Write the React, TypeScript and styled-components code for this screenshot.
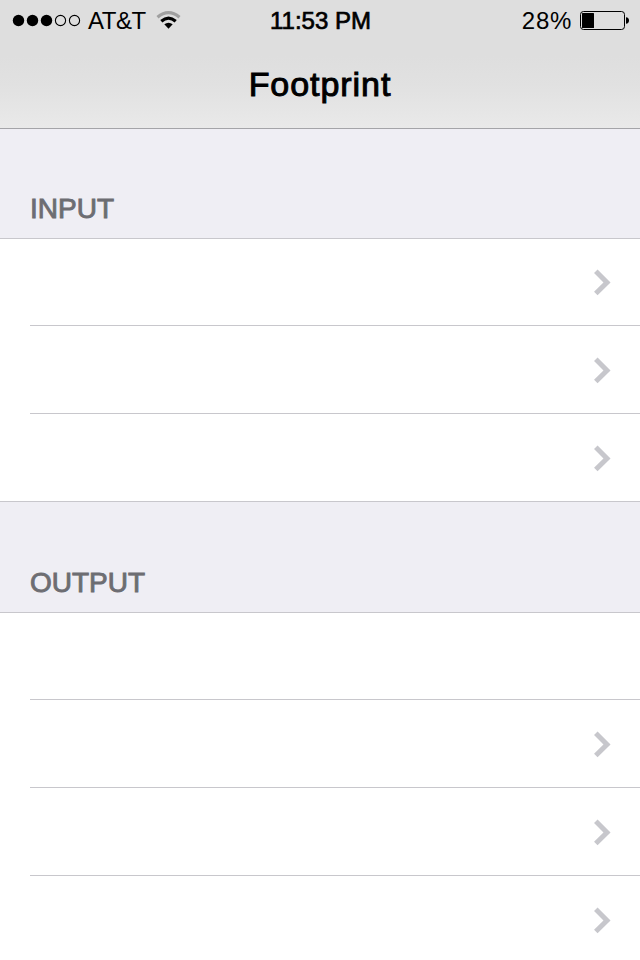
import React from "react";
import styled, { createGlobalStyle } from "styled-components";

const GlobalStyle = createGlobalStyle`
  * { box-sizing: border-box; }
  body { margin: 0; background: #fff; }
`;

const Screen = styled.main`
  width: 640px;
  height: 960px;
  overflow: hidden;
  background: #efeef4;
  font-family: "Liberation Sans", Arial, sans-serif;
  color: #000;
`;

const TopBar = styled.header`
  height: 129px;
  border-bottom: 1px solid #a4a4a8;
  background: linear-gradient(#dedede 0, #dedede 56px, #e1e1e1 85px, #e9e9e9 128px);
`;

const StatusBar = styled.div`
  height: 40px;
  display: grid;
  grid-template-columns: 1fr auto 1fr;
  align-items: center;
  padding: 0 11px 0 12px;
`;

const StatusGroup = styled.div<{ $end?: boolean }>`
  display: flex;
  align-items: center;
  justify-content: ${(p) => (p.$end ? "flex-end" : "flex-start")};
  height: 40px;
`;

const Label = styled.span<{ $spacing: number; $stroke?: number; $indent?: number }>`
  font-size: 24px;
  line-height: 40px;
  height: 38px;
  white-space: nowrap;
  letter-spacing: ${(p) => p.$spacing}px;
  margin-left: ${(p) => p.$indent ?? 0}px;
  -webkit-text-stroke: ${(p) => p.$stroke ?? 0}px #000;
`;

const Title = styled.h1`
  margin: 0;
  height: 88px;
  font-size: 34px;
  font-weight: 400;
  line-height: 88px;
  text-align: center;
  letter-spacing: 0.95px;
  -webkit-text-stroke: 1px #000;
`;

const SectionHeader = styled.h2<{ $height: number }>`
  display: flex;
  align-items: flex-end;
  height: ${(p) => p.$height}px;
  margin: 0;
  padding: 0 30px 13px;
  border-bottom: 1px solid #c8c7cc;
  color: #6d6d72;
  font-size: 28px;
  font-weight: 400;
  line-height: 32px;
  letter-spacing: 0;
  -webkit-text-stroke: 0.9px #6d6d72;
`;

const List = styled.ul`
  margin: 0;
  padding: 0;
  list-style: none;
  background: #fff;
`;

const Row = styled.li`
  height: 88px;
  padding-left: 30px;
  &:first-child { height: 87px; }
  &:last-child { padding-left: 0; }
`;

const RowBody = styled.div`
  display: flex;
  height: 100%;
  align-items: center;
  justify-content: flex-end;
  padding-right: 29px;
  border-bottom: 1px solid #c8c7cc;
`;

const Icon = styled.svg`
  display: block;
  flex: none;
`;

const Signal = () => (
  <Icon width="70" height="14" viewBox="0 0 70 14">
    {[0, 1, 2, 3, 4].map((i) => (
      <circle
        key={i}
        cx={6.5 + i * 14}
        cy="7.5"
        r={i < 3 ? 5.7 : 5.1}
        fill={i < 3 ? "#000" : "none"}
        stroke={i < 3 ? "none" : "#000"}
        strokeWidth="1.1"
      />
    ))}
  </Icon>
);

const WifiIcon = styled(Icon)`
  margin-left: 10px;
`;

const Wifi = () => (
  <WifiIcon width="26" height="20" viewBox="0 0 26 20" fill="none">
    <path d="M1.5 7.2Q12.5 -2 23.5 7.2" stroke="#a0a0a0" strokeWidth="3.2" />
    <path d="M5.3 11.2Q12.5 5 19.7 11.2" stroke="#000" strokeWidth="3.2" />
    <path d="M8.3 14.3Q12.5 11 16.7 14.3L12.5 18.7Z" fill="#000" />
  </WifiIcon>
);

const BatteryIcon = styled(Icon)`
  margin-left: 8px;
`;

const Battery = () => (
  <BatteryIcon width="49" height="20" viewBox="0 0 49 20">
    <rect x=".5" y="1.5" width="44" height="18" rx="3" fill="none" stroke="#000" />
    <rect x="2" y="3" width="12" height="15" rx=".5" />
    <path d="M46 7.2C48 7.4 49 8.6 49 10.5S48 13.6 46 13.8Z" />
  </BatteryIcon>
);

const Chevron = () => (
  <Icon width="18" height="28" viewBox="0 0 18 28" fill="none">
    <path d="M2.8 3.2L14 14.4L2.8 25.6" stroke="#c7c7cc" strokeWidth="5" />
  </Icon>
);

const sections = [
  { title: "INPUT", height: 110, rows: [true, true, true] },
  { title: "OUTPUT", height: 111, rows: [false, true, true, true] },
];

export default function App() {
  return (
    <Screen>
      <GlobalStyle />
      <TopBar>
        <StatusBar>
          <StatusGroup>
            <Signal />
            <Label $spacing={-0.5} $indent={6}>AT&amp;T</Label>
            <Wifi />
          </StatusGroup>
          <Label $spacing={0} $stroke={0.7}>11:53 PM</Label>
          <StatusGroup $end>
            <Label $spacing={0.7}>28%</Label>
            <Battery />
          </StatusGroup>
        </StatusBar>
        <Title>Footprint</Title>
      </TopBar>
      {sections.map((section) => (
        <section key={section.title}>
          <SectionHeader $height={section.height}>{section.title}</SectionHeader>
          <List>
            {section.rows.map((hasChevron, i) => (
              <Row key={i}>
                <RowBody>{hasChevron && <Chevron />}</RowBody>
              </Row>
            ))}
          </List>
        </section>
      ))}
    </Screen>
  );
}
